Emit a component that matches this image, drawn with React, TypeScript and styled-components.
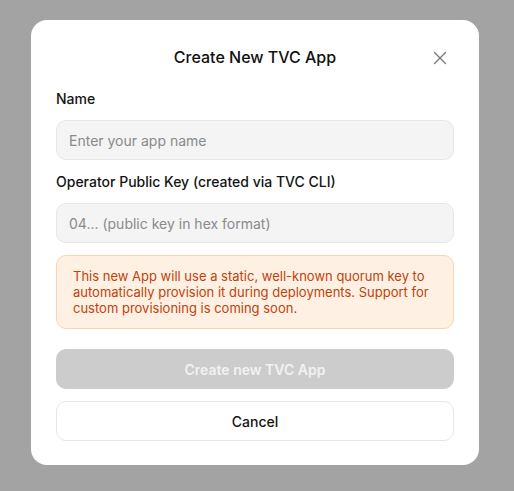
import React from 'react';
import styled, { createGlobalStyle } from 'styled-components';

const GlobalStyle = createGlobalStyle`
  * { box-sizing: border-box; }
  html, body { margin: 0; padding: 0; }
  body {
    font-family: Inter, "Noto Sans", "Liberation Sans", sans-serif;
    background: #a3a3a3;
  }
`;

const Overlay = styled.div`
  width: 514px;
  height: 491px;
  background: #a3a3a3;
  padding: 20px 0 0 31px;
`;

const Modal = styled.div`
  width: 448px;
  background: #ffffff;
  border-radius: 16px;
  padding: 24px 25px 24px 25px;
  display: flex;
  flex-direction: column;
`;

const Header = styled.div`
  position: relative;
  height: 26px;
  display: flex;
  align-items: center;
  justify-content: center;
  margin-bottom: 19px;
`;

const Title = styled.h2`
  margin: 0;
  font-size: 16px;
  line-height: 26px;
  font-weight: 500;
  color: #111111;
`;

const CloseButton = styled.button`
  position: absolute;
  right: 0;
  top: 0;
  width: 28px;
  height: 28px;
  border: none;
  background: transparent;
  padding: 0;
  display: flex;
  align-items: center;
  justify-content: center;
  cursor: pointer;
  color: #777777;
`;

const Field = styled.div`
  display: flex;
  flex-direction: column;
  gap: 11px;
  margin-bottom: 12px;
`;

const Label = styled.label`
  font-size: 14px;
  line-height: 20px;
  font-weight: 500;
  color: #141414;
`;

const Input = styled.input`
  width: 100%;
  height: 40px;
  border: 1px solid #e6e6e6;
  border-radius: 10px;
  background: #f4f4f4;
  padding: 0 12px;
  font-family: inherit;
  font-size: 14px;
  color: #141414;
  outline: none;
  &::placeholder {
    color: #8a8a8a;
  }
`;

const Notice = styled.div`
  border: 1px solid #fbd5ad;
  background: #fef1e3;
  border-radius: 10px;
  padding: 12px 16px 12px 16px;
  font-size: 13px;
  line-height: 16px;
  color: #c2410c;
  margin-bottom: 20px;
`;

const Button = styled.button<{ variant: 'primary' | 'outline' }>`
  width: 100%;
  height: 40px;
  border-radius: 10px;
  font-family: inherit;
  font-size: 14px;
  cursor: pointer;
  border: 1px solid ${(p) => (p.variant === 'primary' ? '#cccccc' : '#e6e6e6')};
  background: ${(p) => (p.variant === 'primary' ? '#cccccc' : '#ffffff')};
  color: ${(p) => (p.variant === 'primary' ? '#f2f2f2' : '#141414')};
  font-weight: ${(p) => (p.variant === 'primary' ? 600 : 500)};
  & + & {
    margin-top: 12px;
  }
`;

export default function App() {
  return (
    <>
      <GlobalStyle />
      <Overlay>
        <Modal>
          <Header>
            <Title>Create New TVC App</Title>
            <CloseButton aria-label="Close">
              <svg width="14" height="14" viewBox="0 0 14 14" fill="none">
                <path d="M1.5 1.5L12.5 12.5M12.5 1.5L1.5 12.5" stroke="currentColor" strokeWidth="1.3" strokeLinecap="round" />
              </svg>
            </CloseButton>
          </Header>
          <Field>
            <Label>Name</Label>
            <Input placeholder="Enter your app name" />
          </Field>
          <Field>
            <Label>Operator Public Key (created via TVC CLI)</Label>
            <Input placeholder="04... (public key in hex format)" />
          </Field>
          <Notice>
            This new App will use a static, well-known quorum key to automatically provision it during
            deployments. Support for custom provisioning is coming soon.
          </Notice>
          <Button variant="primary" disabled>Create new TVC App</Button>
          <Button variant="outline">Cancel</Button>
        </Modal>
      </Overlay>
    </>
  );
}
